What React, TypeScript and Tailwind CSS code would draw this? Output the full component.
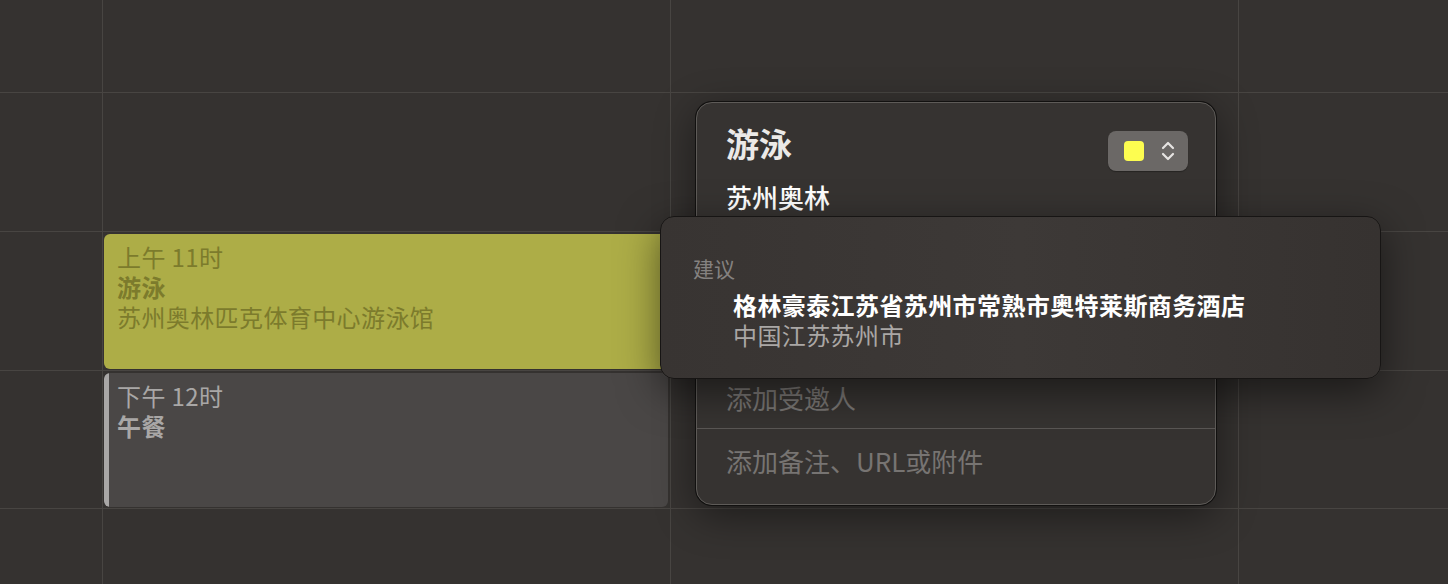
import React from "react";

const FONT = "font-['Noto_Sans_CJK_SC','Noto_Sans',sans-serif]";

function Cell({ children }: { children?: React.ReactNode }) {
  return <div className="bg-[#353230] min-w-0 min-h-0">{children}</div>;
}

function Chevrons() {
  return (
    <svg width="14" height="22" viewBox="0 0 14 22" fill="none">
      <polyline points="2,8 7,3 12,8" stroke="#e6e4e2" strokeWidth="2.2" strokeLinecap="round" strokeLinejoin="round" />
      <polyline points="2,14 7,19 12,14" stroke="#e6e4e2" strokeWidth="2.2" strokeLinecap="round" strokeLinejoin="round" />
    </svg>
  );
}

export default function App() {
  const cells: React.ReactNode[] = [];
  for (let r = 0; r < 5; r++) {
    for (let c = 0; c < 4; c++) {
      const key = `${r}-${c}`;
      if (r === 2 && c === 1) {
        cells.push(
          <Cell key={key}>
            <div className="h-full pt-[2px] pb-px pl-px pr-[2px]">
              <div className="h-full rounded-[6px] bg-[#adad47] pl-[13px] pt-[8px] text-[24px] leading-[30px] tracking-[0.4px] text-[#7c7b2c]">
                <div>上午 11时</div>
                <div className="font-bold">游泳</div>
                <div>苏州奥林匹克体育中心游泳馆</div>
              </div>
            </div>
          </Cell>
        );
      } else if (r === 3 && c === 1) {
        cells.push(
          <Cell key={key}>
            <div className="h-full pt-[2px] pb-px pl-px pr-[2px]">
              <div className="h-full flex rounded-[6px] bg-[#4a4746] overflow-hidden">
                <div className="w-[5px] bg-[#a9a7a6] rounded-l-[6px]" />
                <div className="pl-[8px] pt-[8px] text-[24px] leading-[30px] tracking-[0.4px] text-[#a9a7a6]">
                  <div>下午 12时</div>
                  <div className="font-bold">午餐</div>
                </div>
              </div>
            </div>
          </Cell>
        );
      } else {
        cells.push(<Cell key={key} />);
      }
    }
  }

  return (
    <div className={`relative w-[1448px] h-[584px] overflow-hidden bg-[#484542] ${FONT}`}>
      <div className="grid h-full w-full grid-cols-[102px_567px_567px_1fr] grid-rows-[92px_138px_138px_137px_1fr] gap-px">
        {cells}
      </div>

      {/* Event detail popover */}
      <div className="absolute left-[696px] top-[102px] w-[520px] h-[403px] rounded-[16px] border border-[#5e5b58] bg-[#363331] ring-1 ring-[#121110] shadow-[0_10px_40px_rgba(0,0,0,0.45)] flex flex-col">
        <div className="flex items-start justify-between pl-[29px] pr-[27px] pt-[20px]">
          <div className="text-[33px] leading-[40px] font-bold text-[#ebe9e7]">游泳</div>
          <div className="mt-[8px] flex h-[40px] w-[80px] items-center rounded-[8px] bg-[#6b6866] pl-[16px] shadow-[0_1px_1px_rgba(0,0,0,0.3)]">
            <div className="h-[20px] w-[20px] rounded-[4px] bg-[#fdfd50]" />
            <div className="ml-[17px] flex items-center">
              <Chevrons />
            </div>
          </div>
        </div>
        <div className="pl-[29px] mt-[9px] text-[26px] leading-[34px] font-medium text-white">苏州奥林</div>
        <div className="flex-1" />
        <div className="pl-[29px] text-[26px] leading-[34px] text-[#777472] pb-[13px]">添加受邀人</div>
        <div className="h-px bg-[#5a5754]" />
        <div className="pl-[29px] pt-[15px] pb-[26px] text-[26px] leading-[34px] text-[#777472]">添加备注、URL或附件</div>
      </div>

      {/* Suggestions popover */}
      <div className="absolute left-[660px] top-[216px] w-[721px] h-[163px] rounded-[14px] border border-[#171514] bg-linear-to-r from-[#383432] via-[#3d3937] to-[#363230] shadow-[0_12px_40px_rgba(0,0,0,0.5)]">
        <div className="pl-[32px] pt-[37px] text-[21px] leading-[28px] text-[#858280]">建议</div>
        <div className="pl-[72px] mt-[8px]">
          <div className="text-[24px] leading-[30px] tracking-[0.4px] font-semibold text-white">格林豪泰江苏省苏州市常熟市奥特莱斯商务酒店</div>
          <div className="text-[24px] leading-[30px] tracking-[0.4px] text-[#aaa7a5]">中国江苏苏州市</div>
        </div>
      </div>
    </div>
  );
}
